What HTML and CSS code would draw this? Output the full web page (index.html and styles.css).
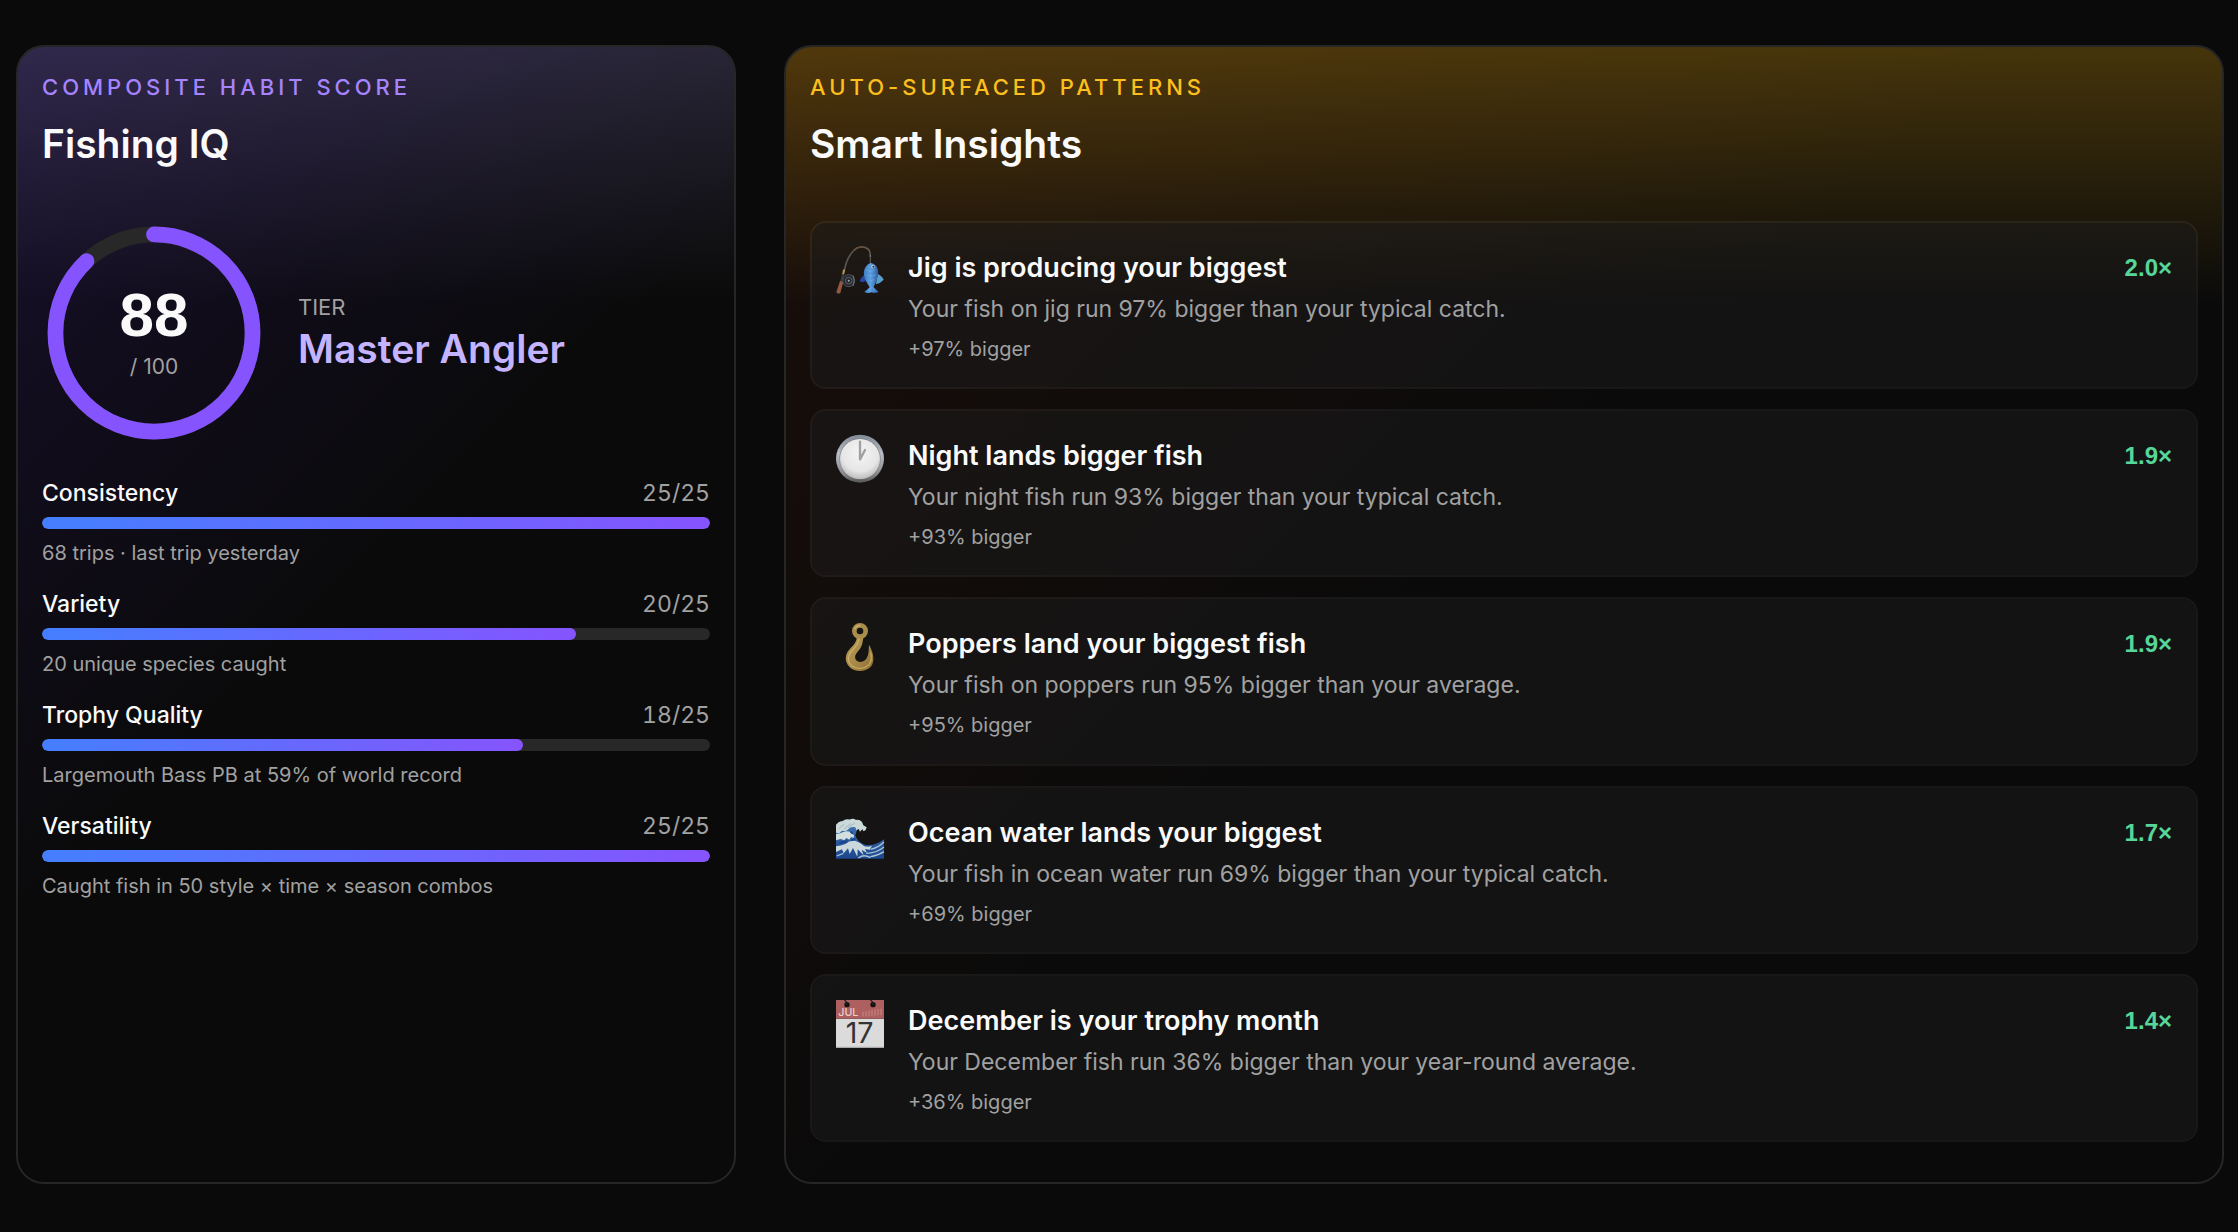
FILE: index.html
```html
<!DOCTYPE html>
<html lang="en">
<head>
<meta charset="utf-8">
<meta name="viewport" content="width=device-width, initial-scale=1">
<title>Fishing IQ and Smart Insights</title>
<link rel="stylesheet" href="styles.css">
</head>
<body>
<main class="dashboard">
  <section class="card card-score">
    <header class="card-header">
      <p class="eyebrow eyebrow-violet">COMPOSITE HABIT SCORE</p>
      <h2 class="card-title">Fishing IQ</h2>
    </header>
    <div class="score">
      <div class="ring">
        <svg class="ring-svg" viewBox="0 0 100 100" aria-hidden="true">
          <circle class="ring-track" cx="50" cy="50" r="44"/>
          <circle class="ring-value" cx="50" cy="50" r="44" pathLength="100" stroke-dasharray="88 100" transform="rotate(-90 50 50)"/>
        </svg>
        <div class="ring-label">
          <span class="ring-number">88</span>
          <span class="ring-total">/ 100</span>
        </div>
      </div>
      <div class="tier">
        <p class="tier-label">TIER</p>
        <p class="tier-name">Master Angler</p>
      </div>
    </div>
    <ul class="metrics">
      <li class="metric">
        <div class="metric-head"><span>Consistency</span><span class="metric-value">25/25</span></div>
        <div class="bar"><div class="bar-fill" style="width:100%"></div></div>
        <p class="metric-note">68 trips · last trip yesterday</p>
      </li>
      <li class="metric">
        <div class="metric-head"><span>Variety</span><span class="metric-value">20/25</span></div>
        <div class="bar"><div class="bar-fill" style="width:80%"></div></div>
        <p class="metric-note">20 unique species caught</p>
      </li>
      <li class="metric">
        <div class="metric-head"><span>Trophy Quality</span><span class="metric-value">18/25</span></div>
        <div class="bar"><div class="bar-fill" style="width:72%"></div></div>
        <p class="metric-note">Largemouth Bass PB at 59% of world record</p>
      </li>
      <li class="metric">
        <div class="metric-head"><span>Versatility</span><span class="metric-value">25/25</span></div>
        <div class="bar"><div class="bar-fill" style="width:100%"></div></div>
        <p class="metric-note">Caught fish in 50 style × time × season combos</p>
      </li>
    </ul>
  </section>

  <section class="card card-insights">
    <header class="card-header">
      <p class="eyebrow eyebrow-amber">AUTO-SURFACED PATTERNS</p>
      <h2 class="card-title">Smart Insights</h2>
    </header>
    <ul class="insights">
      <li class="insight">
        <svg class="insight-icon" viewBox="48 48 144 144" aria-hidden="true">
          <defs>
            <linearGradient id="fish" x1="0" y1="0" x2="1" y2="0"><stop offset="0" stop-color="#3f7fc6"/><stop offset=".45" stop-color="#5b9fdd"/><stop offset="1" stop-color="#2b56a0"/></linearGradient>
          </defs>
          <path d="M72 124C76 100 84 76 100 60C112 46 130 44 144 54C150 58 151 66 151 78" fill="none" stroke="#5a5550" stroke-width="5"/>
          <path d="M104 56L112 50M118 48L128 48M142 53L149 60" stroke="#6d5034" stroke-width="4"/>
          <path d="M151 70V98" stroke="#85888a" stroke-width="2"/>
          <path d="M72 116L69 132" stroke="#b69a55" stroke-width="6"/>
          <path d="M69 130L64 152" stroke="#34363a" stroke-width="7"/>
          <path d="M60 150L70 152L61 186Q54 190 49 184Z" fill="#945740"/>
          <circle cx="86" cy="149" r="18" fill="#24272b" stroke="#4e5358" stroke-width="3"/>
          <circle cx="86" cy="149" r="10" fill="none" stroke="#5d646b" stroke-width="3"/>
          <circle cx="86" cy="149" r="3" fill="#a6aeb5"/>
          <path d="M99 133Q106 149 99 165" fill="none" stroke="#70767c" stroke-width="3"/>
          <path d="M132 133Q120 142 120 151Q127 156 137 150Z" fill="#2947a8"/>
          <path d="M172 128Q187 135 191 146Q181 157 168 160Z" fill="#5a9dcc"/>
          <path d="M153 96C172 100 178 118 173 137C169 153 163 162 161 169L176 182Q167 188 155 184Q143 188 133 183L149 169C145 160 134 149 132 132C130 114 139 99 153 96Z" fill="url(#fish)"/>
          <path d="M138 117Q149 125 166 117M142 132Q151 138 168 131M145 147Q153 151 163 146M153 169L145 181M158 169L165 181" fill="none" stroke="#7dbaf0" stroke-width="2" opacity=".7"/>
          <circle cx="159" cy="107" r="5" fill="#d8e4ea"/><circle cx="160" cy="107" r="3" fill="#17202e"/>
        </svg>
        <div class="insight-body">
          <h3 class="insight-title">Jig is producing your biggest</h3>
          <p class="insight-text">Your fish on jig run 97% bigger than your typical catch.</p>
          <p class="insight-note">+97% bigger</p>
        </div>
        <span class="insight-factor">2.0×</span>
      </li>
      <li class="insight">
        <svg class="insight-icon" viewBox="48 40 144 144" aria-hidden="true">
          <defs>
            <linearGradient id="rim" x1="0" y1="0" x2="0" y2="1"><stop offset="0" stop-color="#7f8996"/><stop offset=".4" stop-color="#b9bec5"/><stop offset=".8" stop-color="#8b8b8e"/><stop offset="1" stop-color="#555"/></linearGradient>
            <radialGradient id="face" cx=".5" cy=".35" r=".65"><stop offset="0" stop-color="#f4f4f4"/><stop offset=".7" stop-color="#e6e6e6"/><stop offset="1" stop-color="#bcbcbc"/></radialGradient>
          </defs>
          <circle cx="120" cy="111" r="72" fill="url(#rim)"/>
          <circle cx="120" cy="111" r="62" fill="#85888e"/>
          <circle cx="120" cy="112" r="60" fill="url(#face)"/>
          <path d="M120 60V113L135 85" fill="none" stroke="#a0a0a0" stroke-width="7" stroke-linecap="round" stroke-linejoin="round"/>
        </svg>
        <div class="insight-body">
          <h3 class="insight-title">Night lands bigger fish</h3>
          <p class="insight-text">Your night fish run 93% bigger than your typical catch.</p>
          <p class="insight-note">+93% bigger</p>
        </div>
        <span class="insight-factor">1.9×</span>
      </li>
      <li class="insight">
        <svg class="insight-icon" viewBox="48 36 144 144" aria-hidden="true">
          <defs>
            <linearGradient id="brass" x1="0" y1="0" x2="1" y2="1"><stop offset="0" stop-color="#b59a55"/><stop offset=".5" stop-color="#a98b49"/><stop offset="1" stop-color="#8a6d30"/></linearGradient>
          </defs>
          <circle cx="120" cy="60" r="17" fill="none" stroke="#a98d4c" stroke-width="14"/>
          <path d="M110 80C109 96 98 104 87 117C75 131 73 152 88 167C103 184 135 184 151 169C165 154 163 129 147 101C146 116 147 130 140 142C132 156 112 156 106 143C102 130 117 120 123 108C128 98 128 90 130 80Z" fill="url(#brass)"/>
          <path d="M117 84C115 104 99 112 90 127C82 141 85 155 95 164C111 176 133 174 146 162C154 152 156 139 152 124" fill="none" stroke="#d5ba75" stroke-width="4" opacity=".7"/>
          <path d="M104 55Q109 43 121 43" fill="none" stroke="#d8c384" stroke-width="4" opacity=".7"/>
        </svg>
        <div class="insight-body">
          <h3 class="insight-title">Poppers land your biggest fish</h3>
          <p class="insight-text">Your fish on poppers run 95% bigger than your average.</p>
          <p class="insight-note">+95% bigger</p>
        </div>
        <span class="insight-factor">1.9×</span>
      </li>
      <li class="insight">
        <svg class="insight-icon" viewBox="48 34 144 144" aria-hidden="true">
          <defs>
            <linearGradient id="sea" x1="0" y1="0" x2="0" y2="1"><stop offset="0" stop-color="#4478b4"/><stop offset="1" stop-color="#1c468e"/></linearGradient>
          </defs>
          <path d="M48 74L62 62L88 56L108 64L112 84L106 104Q111 124 134 132Q164 138 192 116V174H48Z" fill="url(#sea)"/>
          <path d="M48 72Q58 60 68 62Q76 53 89 57Q99 51 108 58Q119 56 126 64L130 74L140 80L137 88L131 92L127 86L120 93L116 85L109 89L106 80Q91 77 85 86L77 92L66 90L58 98L48 96Z" fill="#ccd9d9"/>
          <path d="M48 100Q62 99 70 94Q84 89 91 95L102 103L101 112L93 109L88 117L79 112L73 119L62 115L48 119Z" fill="#d3dede"/>
          <path d="M48 137Q62 135 76 130Q91 117 107 121Q122 126 133 137Q147 140 156 135L149 147L135 145L141 157L125 147L131 164L113 146L112 168L99 142L89 160L84 143L71 158L66 146L48 154Z" fill="#cbd8dc"/>
          <path d="M57 84L73 70M72 86L92 68M84 81L104 67" stroke="#9fb7c8" stroke-width="3"/>
          <path d="M152 146Q175 141 192 124M139 158Q169 158 192 139M151 168Q174 165 192 153M50 166L70 158M115 172Q132 159 151 171" fill="none" stroke="#a7c2d5" stroke-width="4"/>
          <path d="M92 93Q97 99 99 98M94 119Q102 117 106 113M58 127L82 122" stroke="#1a438e" stroke-width="6" fill="none"/>
        </svg>
        <div class="insight-body">
          <h3 class="insight-title">Ocean water lands your biggest</h3>
          <p class="insight-text">Your fish in ocean water run 69% bigger than your typical catch.</p>
          <p class="insight-note">+69% bigger</p>
        </div>
        <span class="insight-factor">1.7×</span>
      </li>
      <li class="insight">
        <svg class="insight-icon" viewBox="48 42 144 144" aria-hidden="true">
          <path d="M48 98H192V186H48Z" fill="#dbdbdb"/>
          <path d="M48 42H192V98H48Z" fill="#ad605f"/>
          <path d="M48 184H192" stroke="#aaa" stroke-width="4"/>
          <circle cx="81" cy="56" r="8" fill="#111"/><circle cx="159" cy="56" r="8" fill="#111"/>
          <path d="M81 56Q81 46 73 42M159 56Q159 46 151 42" fill="none" stroke="#222" stroke-width="4"/>
          <path d="M129 77V91M138 75V91M147 74V91M156 72V90M165 70V89M174 69V88M183 68V87" stroke="#c98785" stroke-width="3"/>
          <text class="calendar-month" x="55" y="91">JUL</text>
          <text class="calendar-day" x="119" y="171">17</text>
        </svg>
        <div class="insight-body">
          <h3 class="insight-title">December is your trophy month</h3>
          <p class="insight-text">Your December fish run 36% bigger than your year-round average.</p>
          <p class="insight-note">+36% bigger</p>
        </div>
        <span class="insight-factor">1.4×</span>
      </li>
    </ul>
  </section>
</main>
</body>
</html>
```
FILE: styles.css
```css
*, *::before, *::after { box-sizing: border-box; }
body, h2, h3, p, ul { margin: 0; padding: 0; }
ul { list-style: none; }

body {
  background: #0a0a0a;
  color: #fafafa;
  font-family: Inter, "Liberation Sans", sans-serif;
  font-size: 23px;
}

.dashboard {
  display: grid;
  grid-template-columns: 1fr 2fr;
  gap: 48px;
  min-height: 100vh;
  padding: 45px 14px 48px 16px;
}

.card {
  display: flex;
  flex-direction: column;
  min-width: 0;
  padding: 24px 24px 40px;
  border: 2px solid #262626;
  border-radius: 28px;
  background-repeat: no-repeat;
}
.card-score {
  background-image:
    linear-gradient(to bottom, rgba(160, 150, 215, 0.19), transparent 256px),
    linear-gradient(135deg, rgba(95, 45, 235, 0.15), transparent 48%);
}
.card-insights {
  background-image:
    linear-gradient(to bottom, rgba(240, 175, 15, 0.26), transparent 256px),
    linear-gradient(135deg, rgba(230, 75, 20, 0.07), transparent 48%);
}

.card-header { margin-bottom: 52px; }
.eyebrow {
  font-size: 22px;
  font-weight: 500;
  line-height: 32px;
  letter-spacing: 4px;
}
.eyebrow-violet { color: #a684ff; }
.eyebrow-amber { color: #fbbf1e; }
.card-title {
  margin-top: 16px;
  font-size: 39px;
  font-weight: 600;
  line-height: 50px;
}

.score {
  display: flex;
  align-items: center;
  gap: 32px;
  margin-bottom: 30px;
}
.ring {
  display: grid;
  flex: none;
  width: 224px;
  height: 224px;
}
.ring > * { grid-area: 1 / 1; }
.ring-svg { width: 100%; height: 100%; }
.ring-track, .ring-value { fill: none; stroke-width: 7; }
.ring-track { stroke: #282828; }
.ring-value { stroke: #8654ff; stroke-linecap: round; }
.ring-label {
  display: flex;
  flex-direction: column;
  align-items: center;
  justify-content: center;
  gap: 4px;
}
.ring-number {
  font-family: "Liberation Sans", Arial, sans-serif;
  font-size: 62px;
  font-weight: 700;
  line-height: 64px;
}
.ring-total {
  color: #a1a1a1;
  font-size: 21px;
  line-height: 32px;
}
.tier-label {
  margin-bottom: 4px;
  color: #a1a1a1;
  font-size: 22px;
  line-height: 28px;
}
.tier-name {
  color: #c4b4ff;
  font-size: 39px;
  font-weight: 600;
  line-height: 48px;
}

.metrics {
  display: flex;
  flex-direction: column;
  gap: 17px;
}
.metric-head {
  display: flex;
  justify-content: space-between;
  margin-bottom: 6px;
  font-weight: 500;
  line-height: 36px;
}
.metric-value {
  color: #a1a1a1;
  font-weight: 400;
  font-variant-numeric: tabular-nums;
}
.bar {
  height: 12px;
  border-radius: 6px;
  background: #282828;
  overflow: hidden;
}
.bar-fill {
  height: 100%;
  border-radius: 6px;
  background: linear-gradient(to right, #447fff, #8654ff);
}
.metric-note {
  margin-top: 8px;
  color: #a1a1a1;
  font-size: 20px;
  line-height: 32px;
}

.insights {
  display: grid;
  flex: 1;
  grid-auto-rows: 1fr;
  gap: 20px;
}
.insight {
  display: flex;
  align-items: flex-start;
  gap: 24px;
  padding: 24px 24px 20px;
  border: 2px solid rgba(255, 255, 255, 0.06);
  border-radius: 16px;
  background: rgba(28, 28, 28, 0.5);
  background-clip: padding-box;
}
.insight-icon {
  flex: none;
  width: 48px;
  height: 48px;
  overflow: visible;
}
.calendar-month {
  fill: #e8cfce;
  font-size: 32px;
  font-weight: 500;
}
.calendar-day {
  fill: #333;
  font-size: 86px;
  font-weight: 400;
  text-anchor: middle;
}
.insight-body { flex: 1; min-width: 0; }
.insight-title {
  font-size: 27px;
  font-weight: 600;
  line-height: 42px;
}
.insight-text {
  margin-top: 4px;
  color: #a1a1a1;
  line-height: 32px;
}
.insight-note {
  margin-top: 8px;
  color: #a1a1a1;
  font-size: 20px;
  line-height: 32px;
}
.insight-factor {
  color: #56d699;
  font-family: "Liberation Sans", Arial, sans-serif;
  font-size: 24px;
  font-weight: 700;
  line-height: 42px;
}
```
